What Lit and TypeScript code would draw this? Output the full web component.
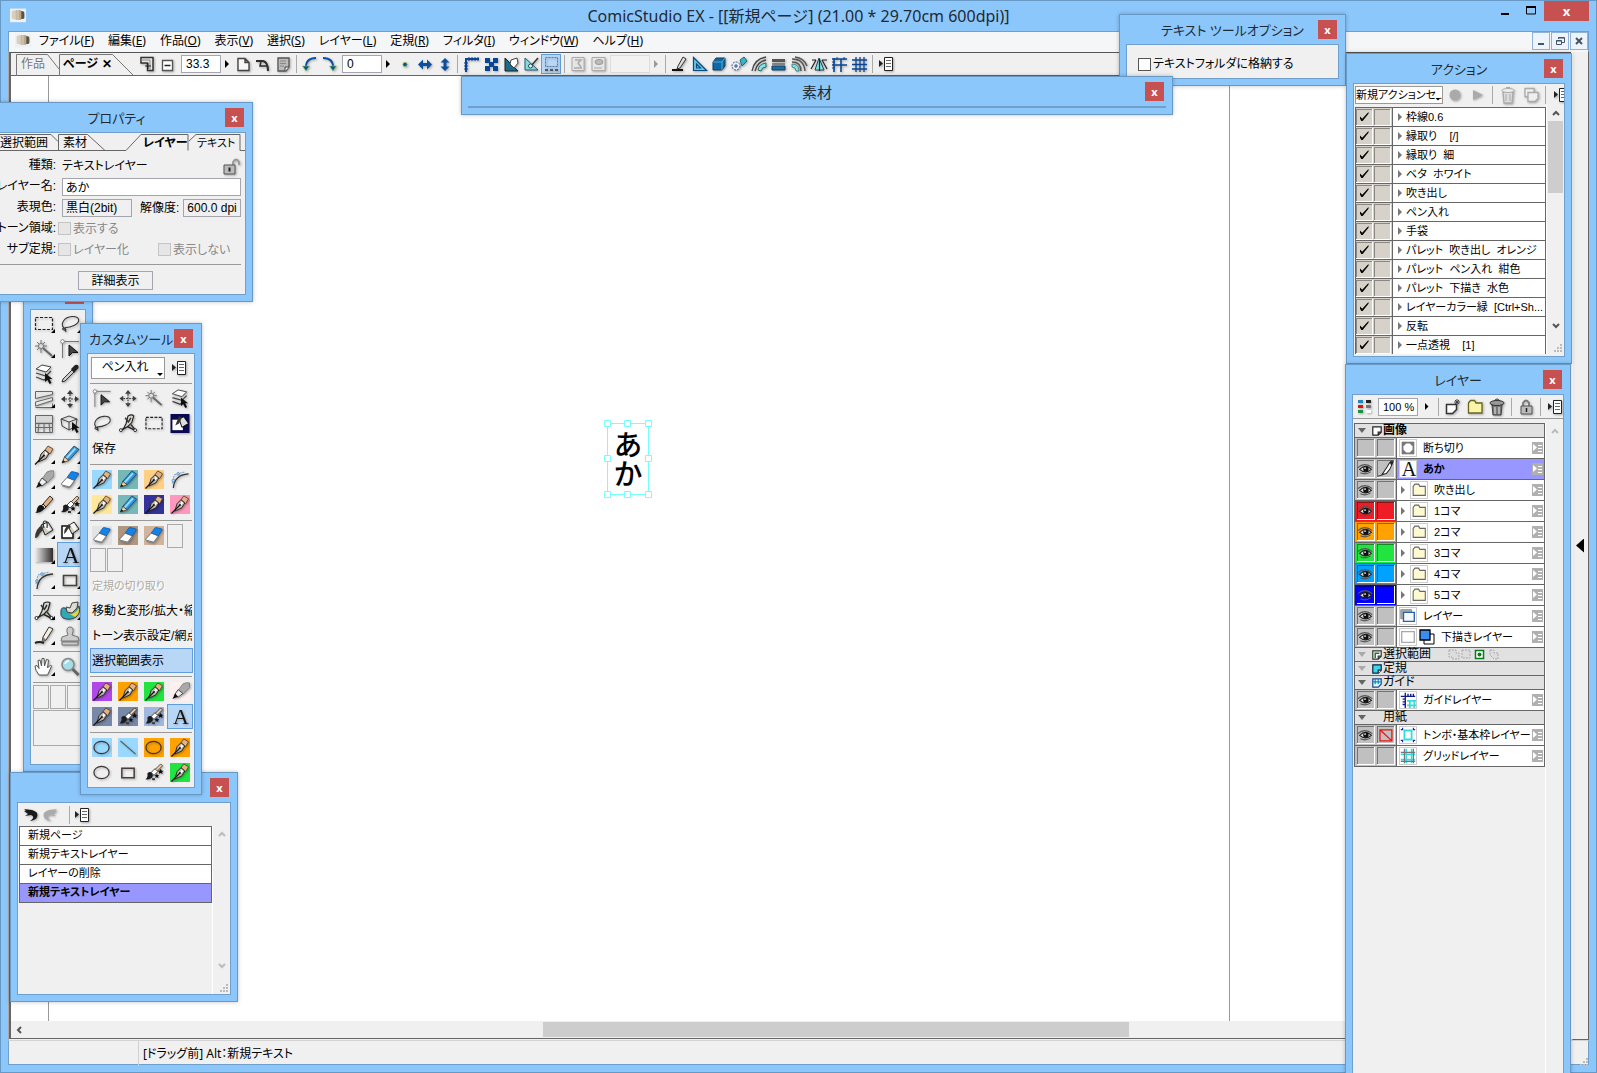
import { LitElement, html, css, svg, nothing, TemplateResult, SVGTemplateResult } from "lit";
import { customElement, property } from "lit/decorators.js";
import { classMap } from "lit/directives/class-map.js";

const nib = svg`
  <path d="M14 1l5 3-3 5-5-4z" fill="#e2b184" stroke="#4a3320" stroke-width=".8"/>
  <path d="M11 5l4 3.500-3 5L4.500 17l2.500-8z" fill="#b9b3a8" stroke="#1d1a16" stroke-width=".9"/>
  <path d="M11.500 6.500l2 2-4 4z" fill="#fff"/>
  <path d="M1 19.500L10 10.500" stroke="#111" stroke-width="1.200"/>
  <circle cx="10" cy="10.500" r="1" fill="#111"/>`;

const patternBrush = svg`
  <path d="M17 1l2 2-6 6-2-2z" fill="#e8c9a0" stroke="#3a2c20" stroke-width=".8"/>
  <path d="M11 6l3 3-4 4-3-3z" fill="#fff" stroke="#222" stroke-width=".8"/>
  <path d="M3 11q3-3 5 0t-1 5q-3 2-6 1 3-2 2-6z" fill="#1c1c1c"/>
  <path d="M17 6l1 2 2 .300-1.500 1.300.500 2-2-1-2 1 .500-2L14 8.300l2-.300zM13 11l.8 1.600 1.800.200-1.300 1.200.400 1.800-1.700-.9-1.600.9.300-1.800-1.300-1.200 1.900-.200z" fill="#111"/>
  <path d="M8 16h3v2H8z" fill="#333"/>`;

const bucket = svg`
  <path d="M7 5l7-3 5 8-8 5z" fill="#cfcac2" stroke="#222"/>
  <path d="M9 5l4-2 4 7-3 1z" fill="#f6f4f0"/>
  <path d="M10 8q-2-7 1-7t2 7" fill="none" stroke="#333" stroke-width="1.200"/>
  <path d="M8 5q-7 4-7 13 3 0 5-5l3-3z" fill="#3b3733"/>`;

const nodes: SVGTemplateResult = svg`
  <path d="M3 17l6-4 8 4" fill="none" stroke="#222" stroke-width="1.500"/>
  <path d="M10 2q4-2 6 0l-2 7-4 4-5 3 3-6z" fill="#d8d4cc" stroke="#222" stroke-width="1.200"/>
  <path d="M10 9l3-5M7 4l3 4M13 11l4 5" stroke="#333" stroke-width="1.500"/>
  <circle cx="2.500" cy="17" r="1.500" fill="#fff" stroke="#222"/>
  <circle cx="17.500" cy="17" r="1.500" fill="#fff" stroke="#222"/>`;

const ICONS: Record<string, SVGTemplateResult> = {
  marquee: svg`<path d="M1.500 3.500h17v12h-17z" fill="none" stroke="#222" stroke-width="1.200" stroke-dasharray="3 1.500"/>`,
  lasso: svg`<path d="M4 14C0 10 4 3 12 2.500s9 6 2 9-9 1.500-9 2.500q2 3-1 2t0-2q1 0 2 4" fill="none" stroke="#333" stroke-width="1.100"/>`,
  wand: svg`<path d="M9 9l9 8" stroke="#666" stroke-width="2"/><path d="M7 1v4M7 10v4M1 7h4M9 7h4M3 3l3 3M11 3L8 6M3 11l2.500-2.500" stroke="#777"/><circle cx="7" cy="7" r="2.500" fill="#ddd" stroke="#777"/>`,
  object: svg`<path d="M2.500 2v17M2 2.500h17" stroke="#777"/><circle cx="2.500" cy="2.500" r="1.800" fill="#fff" stroke="#888"/><path d="M9 6v11l3.500-3.500H18z" fill="#444" stroke="#111"/>`,
  layers: svg`<path d="M2 5l6-4 9 2-5 5z" fill="#fff" stroke="#444"/><path d="M2 9l10 3 5-5M2 13l8 3 4-3" fill="none" stroke="#444" stroke-width="1.300"/><path d="M11 9v9l2.500-2 2 4 2-1-2-4h3z" fill="#111"/>`,
  dropper: svg`<path d="M2 18l1-3 9-9 2 2-9 9z" fill="#ccc" stroke="#333"/><path d="M11 5l4-4q4-1 3.500 3l-4.500 5z" fill="#222"/>`,
  frames: svg`<path d="M1.500 2.500h17v3l-17 4zM1.500 13l17-4.500v3l-17 5.500zM1.500 18.500h17v-4" fill="#e6e6e6" stroke="#666"/>`,
  move: svg`<path d="M10 1L13 5H7zM10 19L13 15H7zM1 10L5 7v6zM19 10L15 7v6z" fill="#3a3a3a"/><path d="M10 5v10M5 10h10" stroke="#444" stroke-width="1.200" stroke-dasharray="2 1"/>`,
  panel: svg`<path d="M2 2h16v6H2z" fill="#d8d8d8"/><path d="M1.500 1.500h17v17h-17zM1.500 9.500h17M1.500 13.500h17M5 9.500l-1 9M10 9.500v9M15 9.500l1 9" fill="none" stroke="#666"/>`,
  cube: svg`<path d="M1 5l8-3 8 3-1 7-7 4-7-4zM1 5l8 3 8-3M9 8v8" fill="none" stroke="#444"/><path d="M12 8v9l2.500-2 2 4 2-1-2-4h3z" fill="#111"/>`,
  pen: nib,
  pencil: svg`<path d="M14 1l5 3.500L9 15.500 4.500 12z" fill="#2b9be2" stroke="#1c3c5c" stroke-width=".8"/><path d="M14.500 3l1.500 1-9 10-1.500-1z" fill="#a6dcff"/><path d="M4.500 12L9 15.500 2 18z" fill="#f0d5a8" stroke="#433" stroke-width=".8"/><path d="M2 18l1.200-3 2 1.800z" fill="#111"/>`,
  marker: svg`<path d="M13 2q4-2 7-1v5l-7 7-5-4z" fill="#a9a9a9" stroke="#777" stroke-width=".8"/><path d="M8 8l5 4-5 4-4-2z" fill="#eee" stroke="#444"/><path d="M5 12l3 3.500-6 2.500z" fill="#111"/>`,
  eraser: svg`<path d="M11 2q.5-.5 1-.4l6 1.400q1 .3.500 1.500l-4 6-7.500-3z" fill="#1483e8" stroke="#135ba2" stroke-width=".8"/><path d="M7 7.500l7.500 3-4 5.500q-.8 1-2 .7L2 15q-1-.5-.4-1.500z" fill="#fff" stroke="#555" stroke-width=".8"/><path d="M10.500 16l4-5.500v2l-4 5q-.8 1-2 .7L2.500 16.500l-.5-1.500 6.500 1.700q1.200.3 2-.7z" fill="#888"/>`,
  brush: svg`<path d="M16 1l3 3-7 8-3-3z" fill="#e0b184" stroke="#3a2c20"/><path d="M9 9l3 3-2 2-3-3z" fill="#ddd" stroke="#222"/><path d="M7 10q4 1 3 4-3 4-9 4 2-1 2-4 1-4 4-4z" fill="#171513"/>`,
  pattern: patternBrush,
  bucket,
  bucketBox: svg`<path d="M2 6h11v12H2z" fill="#fff" stroke="#111" stroke-width="1.500"/><path d="M8 6l6-4 5 7-7 5z" fill="#cfcac2" stroke="#222"/><path d="M10 5l4-2 3 6-3 2z" fill="#f6f4f0"/><path d="M9 4q-5 4-5 10 2-1 4-5l3-2z" fill="#3b3733"/>`,
  closedFill: svg`<path d="M0 0h20v20H0z" fill="#0a0a52"/><path d="M2 6h11v11H2z" fill="#fff"/><path d="M9 5l5-2 5 7-7 4z" fill="#ddd" stroke="#000"/><path d="M9 2l-4 10 4-2 3-6z" fill="#333"/>`,
  gradient: svg`<defs><linearGradient id="fade"><stop offset="0" stop-color="#eee"/><stop offset="1" stop-color="#322b2b"/></linearGradient></defs><path d="M1 3h18v14H1z" fill="url(#fade)"/>`,
  text: svg`<text x="11" y="18" text-anchor="middle" font-family="Liberation Serif, serif" font-size="23" font-weight="400" fill="#111">A</text>`,
  curve: svg`<path d="M3 19Q4 5 19 4" fill="none" stroke="#333" stroke-width="1.300"/><path d="M2 14L4 5l11-3" fill="none" stroke="#6b9dd8" stroke-dasharray="2 1"/><circle cx="8" cy="4" r="1.300" fill="#cde" stroke="#48c" stroke-width=".8"/><circle cx="3" cy="11" r="1.300" fill="#cde" stroke="#48c" stroke-width=".8"/>`,
  rect: svg`<path d="M3.500 5.500h13v10h-13z" fill="none" stroke="#4a3f3f" stroke-width="1.600"/>`,
  joint: nodes,
  smudge: svg`<path d="M1 10q0-4 4-3 4 8 14-2 2 7-3 11-6 4-13 1-3-2-2-7z" fill="#2fa8b8" stroke="#345"/><path d="M10 13q5 0 9-6 1 6-4 9z" fill="#f3d338"/><path d="M12 2l6-1-1 6-5 5-5-1-1-5 4 1z" fill="#e0dcd4" stroke="#444"/>`,
  linePen: svg`<path d="M1 17q4-2 9 0" stroke="#222" stroke-width="2" fill="none"/><path d="M15 1l4 2-7 11-4 2 1-5z" fill="#f4efe6" stroke="#333"/><path d="M9 11l3 2.500-4 2.500z" fill="#876"/>`,
  stamp: svg`<path d="M8 9q-3-8 2-8t2 8l6 2 1 4H1l1-4zM2 16h16v3H2z" fill="#ccc" stroke="#777"/>`,
  hand: svg`<path d="M5 18q-4-5-4-9l2-.500 2 3-1-8 2-.500 1.500 6 .5-7.500h2l.5 7.500 2-6.500 2 .500-1 8 3-3 1 1q-2 5-4 9z" fill="#fff" stroke="#555"/>`,
  zoom: svg`<circle cx="8" cy="7.500" r="6" fill="#a4dde6" stroke="#888" stroke-width="1.600"/><path d="M5 7q1-3 4-3" stroke="#fff" stroke-width="1.500" fill="none"/><path d="M12.500 12l6 6" stroke="#666" stroke-width="3"/>`,
  ellipse: svg`<ellipse cx="9.500" cy="10" rx="8" ry="6.500" fill="none" stroke="#3b3434" stroke-width="1.300"/>`,
  line: svg`<path d="M2 3l16 14" stroke="#555" stroke-width="1.200"/>`,
  flyout: svg`<path d="M3 6v7l4-3.500z" fill="#222"/><path d="M8.500 3.500h8v13h-8z" fill="#fff" stroke="#222"/><path d="M10 6.500h5M10 9.500h5M10 12.500h5" stroke="#666"/>`,
  undoBack: svg`<path d="M4 4l8 1q7 2 5 7-1 3-7 4 6-4 1-6l-6 1 3-2-4-3 2-.5z" fill="#1a1a1a"/>`,
  redoBack: svg`<path d="M16 4L8 5Q1 7 3 12q1 3 7 4-6-4-1-6l6 1-3-2 4-3-2-.5z" fill="#aaa"/>`,
  addPanel: svg`<path d="M2 3.500h12v13H8.500V9H2z" fill="#e8e8e8" stroke="#333" stroke-width="1.500"/><path d="M2 6h9v10" fill="none" stroke="#888"/><path d="M6 12h6M9 9v6" stroke="#222"/>`,
  minusPanel: svg`<path d="M3.500 6.500h10v10h-10z" fill="#fff" stroke="#555" stroke-width="1.300"/><path d="M5.500 11.500h6" stroke="#222" stroke-width="1.500"/>`,
  page: svg`<path d="M5 4.500h7l4 4v8H5zM12 4.500v4h4" fill="#f7f7f7" stroke="#444" stroke-width="1.400"/>`,
  turn: svg`<path d="M3 7h7q5 1 5 10" fill="none" stroke="#2d2d2d" stroke-width="2"/><path d="M8 7l-1 5h8" fill="none" stroke="#2d2d2d" stroke-width="1.500"/>`,
  pageGrey: svg`<path d="M5 4h11v9l-3 4H5z" fill="#bbb" stroke="#555" stroke-width="1.300"/><path d="M7 7h6M7 9.500h6M7 12h4" stroke="#888"/><path d="M12 17v-4h4" fill="#eee" stroke="#444"/>`,
  rotateLeft: svg`<path d="M16 4Q6 4 6 13" fill="none" stroke="#0a50a0" stroke-width="2"/><path d="M2.500 12h7L6 17z" fill="#0a50a0" stroke="#9d3" stroke-width=".6"/>`,
  rotateRight: svg`<path d="M3 4Q13 4 13 13" fill="none" stroke="#0a50a0" stroke-width="2"/><path d="M9.500 12h7L13 17z" fill="#0a50a0" stroke="#9d3" stroke-width=".6"/>`,
  dot: svg`<circle cx="11" cy="10.500" r="2.200" fill="#0a50a0" stroke="#bd4" stroke-width=".6"/>`,
  horizontal: svg`<path d="M4 10.500L9 5.500v3.500h4V5.500l5 5-5 5V12H9v3.500z" fill="#0a50a0"/>`,
  vertical: svg`<path d="M11 4L15.500 8.500h-3v4h3L11 17l-4.500-4.500h3v-4h-3z" fill="#0a50a0"/>`,
  corner: svg`<path d="M5 18V5h13" fill="none" stroke="#0a4594" stroke-width="2"/><path d="M8 3v4M11 3v4M14 3v4M17 3v4M3 9h4M3 12h4M3 15h4" stroke="#0a4594"/>`,
  checker: svg`<path d="M4 4h5v4h3V4h5v5h-4v3h4v5h-5v-4H9v4H4v-5h4V9H4z" fill="#0a4594"/>`,
  rulerHand: svg`<path d="M4 4v13h13L12 12z" fill="#1a6a8a" stroke="#222"/><path d="M10 6l6-2 1 5-4 5-4-4z" fill="#fff" stroke="#444"/>`,
  rulerPen: svg`<path d="M4 4v12h13z" fill="#7fdcdc" stroke="#357"/><path d="M17 4l-7 8" stroke="#333" stroke-width="1.500"/><circle cx="9.500" cy="12" r="2" fill="#dff" stroke="#345"/>`,
  selectionShow: svg`<path d="M4.500 3.500h12v9h-12z" fill="none" stroke="#5b7ba3" stroke-dasharray="2 1"/><path d="M4 15h3v2H4zM9 15h3v2H9zM14 15h3v2h-3z" fill="#555"/>`,
  docOff: svg`<path d="M4 3.500h12v13H4z" fill="#e5e5e5" stroke="#aaa"/><path d="M7 6h6l-3 3 3 4M6 14h8" fill="none" stroke="#aaa" stroke-width="1.500"/>`,
  eyeOff: svg`<path d="M4 3.500h13v13H4z" fill="#e5e5e5" stroke="#aaa"/><ellipse cx="11" cy="8" rx="4" ry="2.500" fill="#bbb" stroke="#999"/><path d="M6 14h8" stroke="#aaa"/>`,
  rulerLine: svg`<path d="M3 16h11" stroke="#111" stroke-width="2"/><path d="M14 3l3 2-6 9-3 1 1-3z" fill="#ddd" stroke="#333"/>`,
  triangle: svg`<path d="M4.500 3.500v13h13zM7.500 10v4h4z" fill="#6cc8e8" fill-rule="evenodd" stroke="#0b4a80" stroke-width="1.200"/>`,
  box: svg`<path d="M4 8l3-4h9v8l-3 4H4z" fill="#0e68a8" stroke="#123c5c"/><path d="M4 8h9v8M13 8l3-4" stroke="#5ac" fill="none"/>`,
  spray: svg`<path d="M11 6l4-3 3 4-5 5z" fill="#35b8c6" stroke="#267"/><circle cx="7" cy="12" r="4" fill="#eef" stroke="#458" stroke-dasharray="2 1"/><path d="M7 10v4M5 12h4" stroke="#258"/>`,
  arcs: svg`<path d="M3 17Q5 5 17 3M6 17Q8 8 17 6" fill="none" stroke="#444" stroke-width="1.300"/><path d="M9 16q1-6 8-7v4q-4 0-5 4z" fill="#7fe3e3" stroke="#366"/>`,
  parallel: svg`<path d="M3 5h13v3H3z" fill="#555"/><path d="M3 12h13v4H3z" fill="#1c6ea8" stroke="#123c5c"/><path d="M3 10h13" stroke="#333"/>`,
  concentric: svg`<path d="M3 8q9 0 9 9M3 5q12 0 13 12M6 3q9 1 12 9" fill="none" stroke="#555" stroke-width="1.500"/><path d="M3 10q7 0 7 7H7q0-4-4-4z" fill="#7fe3e3" stroke="#366" stroke-width=".7"/>`,
  perspective: svg`<path d="M10 4L6 16h9z" fill="#7fe3e3" stroke="#245"/><path d="M2 15l5-9M18 15l-5-9M3 6h4M13 6h5M10.500 5v12" stroke="#222" stroke-width="1.200"/>`,
  rulerGrid: svg`<path d="M5 18V4M3 5h15M3 11h15M12 5v13" stroke="#0a4594" stroke-width="1.600" fill="none"/><path d="M8 3v3M15 3v3M3 8h3M3 14h3" stroke="#0a4594"/>`,
  grid: svg`<path d="M7 3v15M11 3v15M15 3v15M3 6h15M3 10.500h15M3 15h15" stroke="#0a4594" stroke-width="1.300"/>`,
  record: svg`<circle cx="10" cy="10" r="5.500" fill="#aaa"/>`,
  play: svg`<path d="M5 5v10l10-5z" fill="#aaa"/>`,
  trashOff: svg`<path d="M5 7h10l-1 11H6z" fill="#ddd" stroke="#aaa" stroke-width="1.300"/><ellipse cx="10" cy="5.500" rx="6" ry="2" fill="#eee" stroke="#aaa"/><path d="M8 2.500h4M8 9v7M12 9v7" stroke="#aaa"/>`,
  copyOff: svg`<path d="M4 3.500h9v8H4z" fill="#eee" stroke="#aaa" stroke-width="1.300"/><path d="M7 7.500h10v6l-3 3H7z" fill="#eee" stroke="#aaa" stroke-width="1.300"/>`,
  palette: svg`<path d="M3 3h5v3H3z" fill="#28b"/><path d="M3 8h5v3H3z" fill="#d11"/><path d="M3 13h5v3H3z" fill="#1a9040"/><path d="M11 3h5v3h-5z" fill="#222"/><path d="M11 8h5v3h-5z" fill="#777"/><path d="M11 13h5v3h-5z" fill="#fff"/>`,
  newLayer: svg`<path d="M3.500 7.500h10v5l-4 4h-6z" fill="#fff" stroke="#333" stroke-width="1.500"/><path d="M14 2v6M11 5h6M12 3l4 4M16 3l-4 4" stroke="#444"/>`,
  folder: svg`<path d="M3.500 6l2-2.500h4l1.500 2.500h6v10h-13.500z" fill="#fbf5a8" stroke="#6b6320" stroke-width="1.300"/>`,
  folderPale: svg`<path d="M3.500 6l2-2.500h4l1.500 2.500h6v10h-13.500z" fill="#fdfad2" stroke="#666" stroke-width="1.200"/>`,
  trash: svg`<path d="M5 8h10l-1 10H6z" fill="#777" stroke="#444"/><ellipse cx="10" cy="6" rx="7" ry="2.500" fill="#999" stroke="#333"/><path d="M7 4q3-4 6 0" fill="none" stroke="#333"/><path d="M8 10v7M12 10v7" stroke="#eee"/>`,
  lock: svg`<path d="M7 9V6q3-5 6 0v3" fill="none" stroke="#777" stroke-width="1.800"/><path d="M5 9h11v8H5z" fill="#bbb" stroke="#555"/><path d="M10.500 11v4" stroke="#222" stroke-width="1.500"/>`,
  unlock: svg`<path d="M12 10V6q3-5 6 0v3" fill="none" stroke="#999" stroke-width="1.800"/><path d="M3 9h11v9H3z" fill="#bbb" stroke="#555"/><path d="M8.500 11.500v4" stroke="#222" stroke-width="2"/>`,
  eye: svg`<path d="M3 11q7-7 14 0-7 6-14 0z" fill="#ddd" stroke="#222" stroke-width="1.200"/><circle cx="10.500" cy="10.500" r="3.200" fill="#111"/><circle cx="9.500" cy="9.500" r="1" fill="#fff"/><path d="M1 9q8-7 17 0M4 15q6 3 12-1" fill="none" stroke="#555" stroke-width="1.300"/>`,
  editing: svg`<path d="M1 19q8-1 10-6" fill="none" stroke="#222"/><path d="M6 17l6-9 3-5q3-3 4-1l-4 9-4 5z" fill="#fff" stroke="#222" stroke-width="1.200"/><path d="M15 3q2-2 4-1l-2 5z" fill="#222"/>`,
  forbid: svg`<path d="M3.500 4.500h14v13h-14zM3.500 4.500l14 13" fill="none" stroke="#e11" stroke-width="1.500"/>`,
  app: svg`<path d="M0 2h20v17H0z" fill="#eef1f4"/><path d="M2 6q3-3 5-1v10q-3 1-5-1z" fill="#d9cfc0"/><path d="M7 4h7v12H7z" fill="#b7a88d"/><path d="M8 4h3v12H8z" fill="#cfc3ad"/><path d="M14 5q4 0 4 3v5q0 2-4 2z" fill="#5c5143"/>`,
  tMask: svg`<path d="M3 3h14v14H3z" fill="#777"/><path d="M8 5h4l3 3v4l-3 3H8l-3-3V8z" fill="#fff"/>`,
  tLayer: svg`<path d="M2 3h12v10H2z" fill="#aaa" stroke="#888"/><path d="M5 6h12v10H5z" fill="#f4f8ff" stroke="#2a62a8" stroke-width="1.500"/>`,
  tBlank: svg`<path d="M3 4h14v12H3z" fill="#fff" stroke="#aaa" stroke-width="1.500"/>`,
  tGuide: svg`<path d="M12 10v9M17 10v9M9 11h10M9 16h10" stroke="#3dd" stroke-width="2"/><path d="M7 19V2M2 6h16M4 9h3M4 12h3M4 15h3M10 3v3M13 3v3M16 3v3" stroke="#111a8a" stroke-width="1.500"/>`,
  tFrame: svg`<path d="M6 5h8v10H6z" fill="#fff" stroke="#3dd" stroke-width="2"/><path d="M2 4h2V2M16 2v2h2M2 16h2v2M18 16h-2v2" fill="none" stroke="#22a" stroke-width="1.300"/>`,
  tGrid: svg`<path d="M2 8h16M2 14h16M8 2v16M14 2v16" stroke="#3dd" stroke-width="1.800"/><path d="M2 6h16M2 16h16M6 2v16M16 2v16" stroke="#777" stroke-width="1.300"/>`,
  gPage: svg`<path d="M3 3h14v9l-5 5H3zM12 17v-5h5" fill="#fff" stroke="#222" stroke-width="2"/>`,
  gSelection: svg`<path d="M3 3h14v9l-5 5H3zM12 17v-5h5" fill="#fff" stroke="#333" stroke-width="2"/><path d="M7 15V7h7" fill="none" stroke="#197a2a" stroke-width="2.500"/>`,
  gRuler: svg`<path d="M3 3h14v9l-5 5H3z" fill="#3cd8e8" stroke="#124" stroke-width="2"/><path d="M12 17v-5h5" fill="#fff" stroke="#124" stroke-width="2"/>`,
  gGuide: svg`<path d="M3 3h14v9l-5 5H3z" fill="#dff" stroke="#248" stroke-width="2"/><path d="M7 3v9M12 3v9M3 8h14" stroke="#18c" stroke-width="2"/>`,
};

const icon = (name: string, size = "") =>
  html`<svg class="icon ${size}" viewBox="0 0 20 20" aria-hidden="true">${ICONS[name]}</svg>`;

/** Floating palette: blue frame, centred caption, red close box. */
@customElement("palette-window")
export class PaletteWindow extends LitElement {
  @property() caption = "";

  static styles = css`
    :host {
      display: flex;
      flex-direction: column;
      box-sizing: border-box;
      background: #8cc7fb;
      border: 1px solid #6899c4;
      box-shadow: 0 0 4px rgba(0, 0, 0, 0.25);
    }
    .bar {
      display: grid;
      grid-template-columns: var(--caption-indent, 28px) minmax(0, 1fr) 28px;
      flex: none;
      height: 29px;
    }
    .caption {
      grid-column: 2;
      margin: 0;
      text-align: center;
      font: 400 var(--caption-size, 14px)/30px "Noto Sans", "Noto Sans CJK JP", sans-serif;
      font-feature-settings: "palt";
      color: #1e2a35;
      white-space: nowrap;
    }
    .close {
      width: 19px;
      height: 19px;
      margin: 5px 0 0 1px;
      padding: 0;
      border: 0;
      background: #c75050;
      color: #fff;
      font: bold 11px/17px "Noto Sans", sans-serif;
    }
    .body {
      flex: 1;
      min-height: 0;
      margin: 0 6px 6px;
      border: 1px solid #6f9fca;
      background: #f0f0f0;
      overflow: hidden;
    }
  `;

  render() {
    return html`
      <div class="bar">
        <h2 class="caption">${this.caption}</h2>
        <button class="close" aria-label="閉じる">x</button>
      </div>
      <div class="body"><slot></slot></div>
    `;
  }
}

const MENUS: [string, string][] = [
  ["ファイル", "F"], ["編集", "E"], ["作品", "O"], ["表示", "V"], ["選択", "S"],
  ["レイヤー", "L"], ["定規", "R"], ["フィルタ", "I"], ["ウィンドウ", "W"], ["ヘルプ", "H"],
];

const ACTIONS = [
  "枠線0.6", "縁取り\u00a0\u00a0\u00a0\u00a0[/]", "縁取り\u00a0\u00a0細", "ベタ\u00a0\u00a0ホワイト", "吹き出し", "ペン入れ", "手袋",
  "パレット\u00a0\u00a0吹き出し\u00a0\u00a0オレンジ", "パレット\u00a0\u00a0ペン入れ\u00a0\u00a0紺色", "パレット\u00a0\u00a0下描き\u00a0\u00a0水色",
  "レイヤーカラー緑\u00a0\u00a0[Ctrl+Sh...", "反転", "一点透視\u00a0\u00a0\u00a0\u00a0[1]",
];

interface Row {
  name: string;
  group?: boolean;
  icon?: string;
  eye?: boolean;
  second?: string;
  color?: string;
  folder?: boolean;
  active?: boolean;
  bold?: boolean;
  badge?: boolean;
  dim?: boolean;
  modes?: boolean;
}

const LAYERS: Row[] = [
  { name: "画像", group: true, icon: "gPage", bold: true },
  { name: "断ち切り", icon: "tMask" },
  { name: "あか", icon: "text", eye: true, second: "editing", active: true, bold: true },
  { name: "吹き出し", folder: true, eye: true },
  { name: "1コマ", folder: true, eye: true, color: "red" },
  { name: "2コマ", folder: true, eye: true, color: "orange" },
  { name: "3コマ", folder: true, eye: true, color: "green" },
  { name: "4コマ", folder: true, eye: true, color: "sky" },
  { name: "5コマ", folder: true, eye: true, color: "blue" },
  { name: "レイヤー", icon: "tLayer", eye: true },
  { name: "下描きレイヤー", icon: "tBlank", eye: true, badge: true },
  { name: "選択範囲", group: true, icon: "gSelection", dim: true, modes: true },
  { name: "定規", group: true, icon: "gRuler", dim: true },
  { name: "ガイド", group: true, icon: "gGuide" },
  { name: "ガイドレイヤー", icon: "tGuide", eye: true },
  { name: "用紙", group: true },
  { name: "トンボ・基本枠レイヤー", icon: "tFrame", eye: true, second: "forbid" },
  { name: "グリッドレイヤー", icon: "tGrid" },
];

// A trailing "+" marks a tool that opens a sub-tool menu; "*" marks the current tool.
const TOOLS: string[][] = [
  ["marquee+", "lasso+", "wand+", "object", "layers", "dropper", "frames+", "move", "panel", "cube"],
  ["pen+", "pencil+", "marker+", "eraser+", "brush+", "pattern+", "bucket+", "bucketBox+", "gradient+", "text*", "curve+", "rect+"],
  ["joint+", "smudge+", "linePen+", "stamp"],
  ["hand+", "zoom"],
];

@customElement("app-root")
export class AppRoot extends LitElement {
  static styles = css`
    :host {
      display: block;
      position: relative;
      height: 100vh;
      overflow: hidden;
      box-sizing: border-box;
      background: #8cc7fb;
      color: #000;
      font: 12px/16px "Liberation Sans", "Noto Sans CJK JP", sans-serif;
      font-feature-settings: "palt";
      white-space: nowrap;
    }
    * { box-sizing: border-box; }
    button, input, select {
      font: inherit;
      font-feature-settings: inherit;
      color: inherit;
      margin: 0;
      padding: 0;
      border: 0;
      border-radius: 0;
      background: none;
      appearance: none;
    }
    ul { list-style: none; margin: 0; padding: 0; }
    .icon {
      display: block;
      flex: none;
      width: 20px;
      height: 20px;
      filter: drop-shadow(1px 1px 1px rgba(0, 0, 0, 0.3));
    }
    .icon.small { width: 12px; height: 12px; filter: none; }
    .icon.thumb { width: 18px; height: 18px; }
    .icon.app { width: 16px; height: 16px; filter: none; }

    /* frame */
    .frame {
      display: flex;
      flex-direction: column;
      height: 100%;
      padding: 0 7px 7px;
      border: 1px solid #6899c4;
    }
    .titlebar {
      display: grid;
      grid-template-columns: 1fr auto 1fr;
      flex: none;
      height: 30px;
    }
    .titlebar .icon { margin: 6px 0 0 2px; }
    .titlebar h1 {
      margin: 0;
      font: 16px/30px "Noto Sans", "Noto Sans CJK JP", sans-serif;
      color: #1e2a35;
    }
    .winbuttons { display: flex; justify-content: flex-end; height: 20px; }
    .winbuttons button { width: 26px; display: grid; place-items: center; }
    .winbuttons svg { width: 12px; height: 12px; display: block; }
    .winbuttons .quit {
      width: 45px;
      background: #c75050;
      color: #fff;
      font: bold 13px/16px "Noto Sans", sans-serif;
    }
    .menubar {
      display: flex;
      flex: none;
      height: 21px;
      padding-left: 6px;
      border: 1px solid #6f9fca;
      border-bottom: 0;
      background: #f5f6f8;
      font: 12px/18px "Noto Sans", "Noto Sans CJK JP", sans-serif;
      font-feature-settings: "palt";
    }
    .menus { display: flex; gap: 14px; padding-left: 8px; flex: 1; height: 18px; }
    .mdi { display: flex; gap: 1px; }
    .mdi button {
      display: grid;
      place-items: center;
      width: 18px;
      height: 18px;
      border: 1px solid #8fb2d6;
      background: #eef4fb;
    }
    .mdi svg { width: 12px; height: 12px; display: block; }
    .client {
      flex: 1;
      min-height: 0;
      display: grid;
      grid-template-columns: 1fr 18px;
      background: #f0f0f0;
      border-left: 1px solid #a9a9a9;
    }
    .document {
      display: flex;
      flex-direction: column;
      min-width: 0;
      border: 2px solid #666;
      border-width: 1px 0 1px 2px;
      border-top-color: #555;
      margin-bottom: 1px;
    }
    .dock {
      display: flex;
      align-items: center;
      padding-left: 3px;
      border-left: 2px solid #fff;
      border-right: 1px solid #666;
      border-bottom: 1px solid #666;
    }
    .dock i {
      width: 8px;
      height: 14px;
      background: #000;
      clip-path: polygon(100% 0, 100% 100%, 0 50%);
    }

    /* toolbar */
    .toolbar {
      display: flex;
      align-items: center;
      flex: none;
      height: 23px;
      border-bottom: 1px solid #666;
    }
    .tabs { flex: none; display: block; width: 128px; height: 22px; position: relative; }
    .tabs svg { position: absolute; inset: 0; width: 128px; height: 23px; }
    .tabs div { position: relative; display: flex; padding: 1px 0 0 10px; line-height: 20px; }
    .tabs button { width: 42px; text-align: left; color: #777; }
    .tabs .on { color: #000; font-weight: 700; width: 39px; }
    .tabs .x { width: 12px; font-weight: 700; color: #000; }
    .tool { width: 20px; height: 20px; flex: none; }
    .tool.on { background: #b8d6f5; outline: 1px solid #5f9ede; outline-offset: -1px; }
    .field { background: #fff; border: 1px solid #a5a5b0; }
    .toolbar .field { width: 40px; height: 18px; margin: 0 0 1px 2px; padding-left: 4px; }
    .toolbar .field:disabled { background: #f2f2f2; border-color: #ddd; }
    .arrow { flex: none; width: 12px; height: 18px; display: grid; place-items: center; }
    .arrow::before {
      content: "";
      width: 4px;
      height: 8px;
      background: #000;
      clip-path: polygon(0 0, 100% 50%, 0 100%);
    }
    .arrow:disabled::before { background: #999; }
    .sep { flex: none; width: 1px; height: 18px; margin: 0 3px; background: #aaa; }

    /* canvas */
    .canvas { flex: 1; min-height: 0; background: #fff; padding: 0 341px 0 37px; }
    .sheet { position: relative; height: 100%; border: 1px solid #999; border-width: 0 1px; }
    .selection {
      position: absolute;
      left: 558px;
      top: 347px;
      width: 42px;
      height: 72px;
      border: 1px solid #7ff;
      display: grid;
      place-items: center;
      writing-mode: vertical-rl;
      font: 500 29px/30px "Noto Sans CJK JP", serif;
      font-feature-settings: normal;
    }
    .handles { position: absolute; inset: -4px; width: 48px; height: 78px; fill: #fff; stroke: #7ff; }
    .hscroll {
      flex: none;
      display: grid;
      grid-template-columns: 16px 516fr 586fr 426fr 16px;
      height: 17px;
      align-items: center;
      background: #f0f0f0;
    }
    .hscroll .thumb { grid-column: 3; height: 15px; background: #cdcdcd; }
    .chev { width: 8px; height: 8px; fill: none; stroke: #555; stroke-width: 2; display: block; justify-self: center; }
    .chev.faint { stroke: #bbb; }
    .status {
      flex: none;
      display: grid;
      grid-template-columns: 129px 1fr auto;
      height: 25px;
      border: 1px solid #6f9fca;
      border-top: 1px solid #d4d4d4;
      background: #f0f0f0;
      font: 12px/25px "Noto Sans", "Noto Sans CJK JP", sans-serif;
      font-feature-settings: "palt";
    }
    .status span { border-left: 1px solid #d0d0d0; padding-left: 4px; }
    .grip { width: 8px; height: 8px; fill: #bbb; display: block; align-self: end; }

    /* palette placement on the desktop */
    palette-window { position: absolute; }
    .pText { right: 251px; top: 14px; width: 227px; height: 72px; --caption-size: 13px; }
    .pMaterial { left: 461px; right: 424px; top: 76px; height: 39px; --caption-size: 15px; }
    .pAction { right: 25px; top: 53px; width: 226px; height: 311px; --caption-size: 13px; }
    .pLayer { right: 26px; top: 364px; bottom: -10px; width: 226px; --caption-size: 13px; }
    .pTools { left: 23px; top: 279px; width: 70px; height: 493px; }
    .pProps { left: -20px; top: 102px; width: 273px; height: 200px; --caption-size: 13px; }
    .pHistory { left: 10px; top: 772px; width: 228px; height: 230px; }
    .pCustom { left: 80px; top: 323px; width: 122px; height: 472px; --caption-indent: 8px; --caption-size: 13px; }

    .tick { display: flex; align-items: center; gap: 2px; }
    .tick input { width: 13px; height: 13px; border: 1px solid #555; background: #fff; }
    .tick input:disabled { border-color: #c4c4c4; background: #e6e6e6; }
    .tick.off { color: #888; }
    .folderOption { padding: 11px; }

    /* properties */
    .ptabs { position: relative; height: 18px; }
    .ptabs svg { position: absolute; inset: 0; width: 258px; height: 18px; fill: none; stroke: #666; }
    .ptabs div { position: relative; display: grid; grid-template-columns: 63px 80px 54px 1fr; padding-left: 12px; line-height: 20px; }
    .ptabs button { text-align: left; line-height: 20px; }
    .ptabs .on { font-weight: 700; }
    .ptabs .last { font-size: 11px; }
    .props { display: grid; grid-template-columns: 68px minmax(0, 1fr); column-gap: 6px; padding: 4px 4px 0 0; }
    .props > .key { text-align: right; line-height: 21px; }
    .props > .val { display: flex; align-items: center; height: 21px; gap: 8px; }
    .val .field { height: 18px; padding: 0 3px; flex: 1; min-width: 0; }
    .val output.field { flex: none; background: #f0f0f0; line-height: 16px; }
    .val .mode { width: 70px; }
    .val .dpi { width: 58px; }
    .val .label { flex: 1; text-align: right; margin-right: -4px; }
    .val .grow { flex: 1; }
    .val .tick { margin-left: -4px; }
    .val .wide { width: 96px; }
    .rule { height: 1px; background: #999; border: 0; margin: 4px 4px 6px 0; }
    .detail { display: flex; justify-content: center; padding-right: 2px; }
    .more { width: 75px; height: 19px; border: 1px solid #a5a5b0; }

    /* tool palettes */
    .grid2 { display: grid; grid-template-columns: 26px 26px; }
    .grid4 { display: grid; grid-template-columns: repeat(4, 26px); padding-left: 1px; }
    .cell { width: 26px; height: 25px; display: grid; place-items: center; position: relative; }
    .cell.left { place-items: center start; }
    .cell.more2::after {
      content: "";
      position: absolute;
      right: 2px;
      bottom: 3px;
      width: 4px;
      height: 4px;
      background: #000;
      clip-path: polygon(100% 0, 100% 100%, 0 100%);
    }
    .cell.on { background: #b8d6f5; box-shadow: inset 0 0 0 1px #5f9ede; }
    .line { height: 1px; margin: 3px 2px 2px; background: #999; border: 0; }
    .tools { padding-top: 1px; }
    .slots { display: flex; gap: 1px; padding-left: 2px; height: 25px; }
    .slot { width: 16px; height: 24px; border: 1px solid #aaa; }
    .bigslot { width: 56px; height: 36px; margin: 0 0 0 2px; border: 1px solid #aaa; }
    .tile { display: block; width: 20px; height: 19px; }
    .tile .icon { height: 19px; }
    .c-sky { background: #99d9ff; }
    .c-teal { background: #76b8b8; }
    .c-peach { background: #ffd084; }
    .c-cream { background: #ffe89a; }
    .c-navy { background: #32329a; }
    .c-pink { background: #ff98bc; }
    .c-grey { background: #e4e4e4; }
    .c-brown { background: #ae9680; }
    .c-tan { background: #d0b49c; }
    .c-purple { background: #b048e8; }
    .c-orange { background: #ffa200; }
    .c-green { background: #22e440; }
    .c-rose { background: #fff0f0; }
    .c-slate { background: #7888a8; }
    .c-mist { background: #a0b8e0; }
    .picker { display: flex; align-items: center; gap: 4px; height: 26px; padding: 2px 0 0 3px; }
    .picker select { width: 74px; height: 22px; border: 1px solid #999; background: #fff; padding: 0 6px 3px 0; text-align: center; text-align-last: center; }
    .combo { position: relative; display: block; }
    .combo::after {
      content: "";
      position: absolute;
      right: 2px;
      bottom: 3px;
      width: 6px;
      height: 3px;
      background: #000;
      clip-path: polygon(0 0, 100% 0, 50% 100%);
    }
    .command {
      display: block;
      width: 103px;
      height: 25px;
      margin-left: 2px;
      padding-left: 1px;
      overflow: hidden;
      text-align: left;
      border: 1px solid transparent;
    }
    .command:disabled { color: #aaa; text-shadow: 1px 1px #fff; font-size: 11px; }
    .command.on { background: #b8d6f5; border-color: #5f9ede; }

    /* lists */
    .htools { display: flex; align-items: center; height: 23px; padding-left: 2px; gap: 1px; }
    .htools .sep { margin: 0 1px 0 7px; }
    .listing { display: grid; grid-template-columns: minmax(0, 1fr) 18px; }
    .side { display: flex; flex-direction: column; align-items: center; border-left: 1px solid #fff; padding-top: 4px; }
    .history { padding: 0 0 0 1px; height: 168px; font-size: 11px; }
    .history li { height: 19px; padding-left: 8px; line-height: 17px; background: #fff; border: 1px solid #666; border-bottom-width: 0; }
    .history li:last-child { background: #9797ff; font-weight: 700; border-bottom-width: 1px; height: 20px; }
    .push { flex: 1; }
    .side .grip { align-self: center; margin: 14px 0 2px 4px; }
    .abar { display: flex; align-items: center; height: 21px; padding-left: 1px; }
    .abar select { width: 88px; height: 18px; border: 1px solid #999; background: #fff; font-size: 11px; }
    .abar .tool { width: 23px; padding-left: 2px; }
    .actions { margin: 2px 0 0 1px; font-size: 11px; }
    .actions li {
      display: grid;
      grid-template-columns: 18px 18px 14px 1fr;
      align-items: center;
      height: 19px;
      border: 1px solid #666;
      border-bottom: 0;
      background: linear-gradient(90deg, #d6d2ca 36px, #666 36px, #666 37px, #fff 37px);
    }
    .actions input, .actions b { width: 17px; height: 17px; border: 1px solid #fff; border-width: 0 1px 1px 0; box-shadow: inset 1px 1px #8c8880; display: grid; place-items: center; }
    .actions input::before {
      content: "";
      width: 9px;
      height: 9px;
      background: #000;
      clip-path: polygon(0 45%, 30% 75%, 100% 0, 100% 20%, 35% 100%, 20% 100%, 0 65%);
    }
    .tri { width: 4px; height: 8px; background: #777; clip-path: polygon(0 0, 100% 50%, 0 100%); justify-self: end; margin-right: 4px; }
    .vthumb { width: 15px; height: 72px; margin-top: 4px; background: #cdcdcd; }
    .lbar { display: flex; align-items: center; height: 24px; padding-left: 1px; border-bottom: 1px solid #999; }
    .lbar .field { width: 40px; height: 18px; padding-left: 4px; margin-left: 2px; font-size: 11px; }
    .lbar .arrow { width: 17px; }
    .lbar .tool { width: 22px; padding-left: 1px; }
    .lists { padding-top: 4px; height: 100%; }
    .layers { font-size: 11px; padding-left: 1px; }
    .layers li { display: flex; align-items: center; height: 21px; border: 1px solid #666; border-width: 1px 1px 0; background: #fff; }
    .layers li.group { height: 14px; background: #e1e1e1; font-size: 12px; line-height: 13px; padding-left: 3px; }
    .layers .open { width: 8px; height: 5px; margin-right: 5px; background: #666; clip-path: polygon(0 0, 100% 0, 50% 100%); }
    .layers .dim .open { background: #aaa; }
    .layers .group .none { width: 12px; }
    .layers li.active { background: #9797ff; }
    .layers li.bold { font-weight: 700; }
    .layers li:last-child { height: 22px; border-bottom-width: 1px; }
    .vis { display: flex; gap: 2px; width: 42px; height: 100%; padding: 1px 0 0 2px; background: #c0c0c0; border-right: 1px solid #666; flex: none; }
    .vis button { width: 18px; height: 18px; border: 1px solid #fff; border-width: 0 1px 1px 0; box-shadow: inset 1px 1px rgba(0, 0, 0, 0.4); }
    .vis .icon { width: 17px; height: 17px; filter: none; }
    .vis.red { background: #ee1c25; }
    .vis.orange { background: #ffa200; }
    .vis.green { background: #22e440; }
    .vis.sky { background: #00a2ff; }
    .vis.blue { background: #0000ff; }
    .layers .thumb { margin: 0 6px 0 2px; background: #fff; outline: 1px solid #ccc; outline-offset: -1px; filter: none; }
    .layers .branch { width: 4px; height: 8px; margin: 0 3px 0 4px; background: #777; clip-path: polygon(0 0, 100% 50%, 0 100%); }
    .layers .name { flex: 1; min-width: 0; }
    .layers .menu { flex: none; width: 11px; height: 12px; margin-right: 1px; background: #b0b0b0; }
    .layers .menu svg { width: 11px; height: 12px; display: block; }
    .badge { width: 16px; height: 16px; margin: 0 6px 0 -4px; flex: none; }
    .modes { width: 52px; height: 11px; margin-left: 17px; }
  `;

  private tool(name: string, label: string, on = false) {
    return html`<button class="tool ${on ? "on" : ""}" aria-label=${label}>${icon(name)}</button>`;
  }

  private chevron(dir: "up" | "down" | "left", faint = false) {
    const d = { up: "M1 6l3-3 3 3", down: "M1 2l3 3 3-3", left: "M6 1L3 4l3 3" }[dir];
    return html`<svg class="chev ${faint ? "faint" : ""}" viewBox="0 0 8 8"><path d=${d} /></svg>`;
  }

  private grip() {
    return html`<svg class="grip" viewBox="0 0 8 8"><path d="M6 0h2v2H6zM3 3h2v2H3zM6 3h2v2H6zM0 6h2v2H0zM3 6h2v2H3zM6 6h2v2H6z" /></svg>`;
  }

  private toolbar() {
    const rulers = ["rulerLine", "triangle", "box", "spray", "arcs", "parallel", "concentric", "perspective", "rulerGrid", "grid"];
    return html`
      <div class="toolbar">
        <div class="tabs">
          <svg viewBox="0 0 128 23" fill="none" stroke="#777"><path d="M5.500 23V1.500h31L48 16M48.500 23V1.500h53L122 22" /></svg>
          <div>
            <button>作品</button><button class="on">ページ</button><button class="x" aria-label="ページを閉じる">✕</button>
          </div>
        </div>
        ${this.tool("addPanel", "拡大")} ${this.tool("minusPanel", "縮小")}
        <input class="field" aria-label="表示倍率" value="33.3" />
        <button class="arrow" aria-label="倍率の一覧"></button>
        ${this.tool("page", "ページ")} ${this.tool("turn", "めくる")} ${this.tool("pageGrey", "全体表示")}
        <i class="sep"></i>
        ${this.tool("rotateLeft", "左回転")} ${this.tool("rotateRight", "右回転")}
        <input class="field" aria-label="回転角度" value="0" />
        <button class="arrow" aria-label="角度の一覧"></button>
        ${this.tool("dot", "中央")} ${this.tool("horizontal", "左右反転")} ${this.tool("vertical", "上下反転")}
        <i class="sep"></i>
        ${this.tool("corner", "ルーラー")} ${this.tool("checker", "透明")} ${this.tool("rulerHand", "定規移動")}
        ${this.tool("rulerPen", "スナップ")} ${this.tool("selectionShow", "選択範囲表示", true)}
        <i class="sep"></i>
        ${this.tool("docOff", "トーン")} ${this.tool("eyeOff", "トーン表示")}
        <input class="field" aria-label="トーン倍率" disabled />
        <button class="arrow" aria-label="トーンの一覧" disabled></button>
        <i class="sep"></i>
        ${rulers.map((r, i) => this.tool(r, `定規 ${i + 1}`))}
        <i class="sep"></i>
        ${this.tool("flyout", "メニュー")}
      </div>
    `;
  }

  private toolCell(spec: string) {
    const name = spec.replace(/[+*]/, "");
    return html`<button class=${classMap({ cell: true, more2: spec.endsWith("+"), on: spec.endsWith("*") })} aria-label=${name}>
      ${icon(name)}
    </button>`;
  }

  private tiles(specs: string[]) {
    return html`<div class="grid4">
      ${specs.map((s) => {
        if (s === "slot") return html`<div class="cell left"><i class="slot"></i></div>`;
        const [name, tint = ""] = s.split(":");
        return html`<button class="cell ${tint === "on" ? "on" : ""}" aria-label=${name}>
          <span class="tile ${tint ? "c-" + tint : ""}">${icon(name)}</span>
        </button>`;
      })}
    </div>`;
  }

  private layerRow(r: Row): TemplateResult {
    if (r.group) {
      return html`<li class=${classMap({ group: true, bold: !!r.bold, dim: !!r.dim })}>
        <i class="open"></i>${r.icon ? icon(r.icon, "small") : html`<i class="none"></i>`}<span>${r.name}</span>
        ${r.modes
          ? html`<svg class="modes" viewBox="0 0 52 11" fill="none">
              <path d="M1 1h7v3h3v6H4V8H1zM14 1h8v8h-8zM42 1h4v3h4v6h-4L42 6z" fill="#ddd" stroke="#aaa" stroke-dasharray="2 1" />
              <path d="M27.500 1.500h8v8h-8z" fill="#fff" stroke="#0a7a1a" stroke-width="1.500" /><circle cx="31.500" cy="5.500" r="2" fill="#0a7a1a" />
            </svg>`
          : nothing}
      </li>`;
    }
    return html`<li class=${classMap({ active: !!r.active, bold: !!r.bold })}>
      <div class="vis ${r.color ?? ""}">
        <button aria-label="表示">${r.eye ? icon("eye") : nothing}</button>
        <button aria-label="状態">${r.second ? icon(r.second) : nothing}</button>
      </div>
      ${r.folder ? html`<i class="branch"></i>` : nothing}
      ${icon(r.folder ? "folderPale" : r.icon!, "thumb")}
      ${r.badge
        ? html`<svg class="badge" viewBox="0 0 16 16"><path d="M5 5h10v10H5z" fill="#fff" stroke="#000" /><path d="M1 1h10v10H1z" fill="#3a8cf0" stroke="#000" stroke-width="1.300" /></svg>`
        : nothing}
      <span class="name">${r.name}</span>
      <button class="menu" aria-label="レイヤーメニュー">
        <svg viewBox="0 0 11 12"><path d="M1 2v7l4-3.500zM6 3h4v1H6zM6 6h4v1H6zM6 9h4v1H6z" fill="#fff" /></svg>
      </button>
    </li>`;
  }

  render() {
    return html`
      <div class="frame">
        <header class="titlebar">
          ${icon("app", "app")}
          <h1>ComicStudio EX - [[新規ページ] (21.00 * 29.70cm 600dpi)]</h1>
          <div class="winbuttons">
            <button aria-label="最小化"><svg viewBox="0 0 12 12"><path d="M2 8h8v2H2z" /></svg></button>
            <button aria-label="最大化"><svg viewBox="0 0 12 12"><path d="M1.500 2h9v7h-9z" fill="none" stroke="#000" /><path d="M1 1h10v2H1z" /></svg></button>
            <button class="quit" aria-label="閉じる">x</button>
          </div>
        </header>
        <nav class="menubar">
          ${icon("app", "app")}
          <div class="menus">${MENUS.map(([t, k]) => html`<button>${t}(<u>${k}</u>)</button>`)}</div>
          <div class="mdi">
            <button aria-label="最小化"><svg viewBox="0 0 12 12"><path d="M3 8h6v2H3z" fill="#456" /></svg></button>
            <button aria-label="元に戻す"><svg viewBox="0 0 12 12" fill="none" stroke="#456"><path d="M4.500 4V2.500h6v5H8M2.500 5.500h5v4h-5zM4 3h6.500M2 6h5.500" /></svg></button>
            <button aria-label="閉じる"><svg viewBox="0 0 12 12"><path d="M3 3l6 6M9 3L3 9" stroke="#456" stroke-width="2" /></svg></button>
          </div>
        </nav>
        <main class="client">
          <section class="document">
            ${this.toolbar()}
            <div class="canvas">
              <div class="sheet">
                <div class="selection">
                  <svg class="handles" viewBox="0 0 48 78">
                    <path d="M.5.5h6v6h-6zM20.500.5h6v6h-6zM41.500.5h6v6h-6zM.5 35.500h6v6h-6zM41.500 35.500h6v6h-6zM.5 71.500h6v6h-6zM20.500 71.500h6v6h-6zM41.500 71.500h6v6h-6z" />
                  </svg>
                  <span>あか</span>
                </div>
              </div>
            </div>
            <div class="hscroll">${this.chevron("left")}<i class="thumb"></i></div>
          </section>
          <aside class="dock"><i></i></aside>
        </main>
        <footer class="status"><div></div><span>[ドラッグ前] Alt：新規テキスト</span>${this.grip()}</footer>
      </div>

      <palette-window class="pText" caption="テキスト ツールオプション">
        <div class="folderOption"><label class="tick"><input type="checkbox" />テキストフォルダに格納する</label></div>
      </palette-window>

      <palette-window class="pMaterial" caption="素材"></palette-window>

      <palette-window class="pAction" caption="アクション">
        <div class="abar">
          <label class="combo"><select aria-label="アクションセット"><option>新規アクションセ...</option></select></label>
          ${this.tool("record", "記録")} ${this.tool("play", "再生")}<i class="sep"></i>
          ${this.tool("trashOff", "削除")} ${this.tool("copyOff", "複製")}<i class="sep"></i>${this.tool("flyout", "メニュー")}
        </div>
        <div class="listing">
          <ul class="actions">
            ${ACTIONS.map((a) => html`<li><input type="checkbox" checked aria-label=${a} /><b></b><i class="tri"></i><span>${a}</span></li>`)}
          </ul>
          <div class="side">${this.chevron("up")}<i class="vthumb"></i><i class="push"></i>${this.chevron("down")}${this.grip()}</div>
        </div>
      </palette-window>

      <palette-window class="pLayer" caption="レイヤー">
        <div class="lbar">
          ${this.tool("palette", "カラー表示")}<input class="field" aria-label="不透明度" value="100 %" />
          <button class="arrow" aria-label="不透明度の一覧"></button><i class="sep"></i>
          ${this.tool("newLayer", "新規レイヤー")} ${this.tool("folder", "新規フォルダ")} ${this.tool("trash", "削除")}<i class="sep"></i>
          ${this.tool("lock", "ロック")}<i class="sep"></i>${this.tool("flyout", "メニュー")}
        </div>
        <div class="listing lists">
          <ul class="layers">${LAYERS.map((r) => this.layerRow(r))}</ul>
          <div class="side">${this.chevron("up", true)}</div>
        </div>
      </palette-window>

      <palette-window class="pTools">
        <div class="tools">
          ${TOOLS.map((g) => html`<div class="grid2">${g.map((t) => this.toolCell(t))}</div><hr class="line" />`)}
          <div class="slots"><i class="slot"></i><i class="slot"></i><i class="slot"></i></div>
          <div class="bigslot"></div>
        </div>
      </palette-window>

      <palette-window class="pProps" caption="プロパティ">
        <div class="ptabs">
          <svg viewBox="0 0 258 18"><path d="M0 1.500h63l7 7M70.500 17V1.500h29L117 17.500h21L153 1.500h47v16M201 8l7-6.500h44v16h6M0 17.500h138" /></svg>
          <div><button>選択範囲</button><button>素材</button><button class="on">レイヤー</button><button class="last">テキスト</button></div>
        </div>
        <div class="props">
          <span class="key">種類:</span>
          <span class="val">テキストレイヤー<i class="grow"></i>${icon("unlock")}</span>
          <label class="key" for="layer-name">レイヤー名:</label>
          <span class="val"><input id="layer-name" class="field" value="あか" /></span>
          <span class="key">表現色:</span>
          <span class="val"><output class="field mode">黒白(2bit)</output><span class="label">解像度:</span><output class="field dpi">600.0 dpi</output></span>
          <span class="key">トーン領域:</span>
          <span class="val"><label class="tick off"><input type="checkbox" disabled />表示する</label></span>
          <span class="key">サブ定規:</span>
          <span class="val"><label class="tick off wide"><input type="checkbox" disabled />レイヤー化</label><label class="tick off"><input type="checkbox" disabled />表示しない</label></span>
        </div>
        <hr class="rule" />
        <div class="detail"><button class="more">詳細表示</button></div>
      </palette-window>

      <palette-window class="pHistory">
        <div class="htools">${this.tool("undoBack", "取り消し")} ${this.tool("redoBack", "やり直し")}<i class="sep"></i>${this.tool("flyout", "メニュー")}</div>
        <div class="listing">
          <ul class="history">
            <li>新規ページ</li><li>新規テキストレイヤー</li><li>レイヤーの削除</li><li>新規テキストレイヤー</li>
          </ul>
          <div class="side">${this.chevron("up", true)}<i class="push"></i>${this.chevron("down", true)}${this.grip()}</div>
        </div>
      </palette-window>

      <palette-window class="pCustom" caption="カスタムツール">
        <div class="picker">
          <label class="combo"><select aria-label="カスタムセット"><option>ペン入れ</option></select></label>
          <button class="tool" aria-label="メニュー">${icon("flyout")}</button>
        </div>
        <hr class="line" />
        ${this.tiles(["object", "move", "wand", "layers", "lasso", "joint", "marquee", "closedFill"])}
        <button class="command">保存</button>
        <hr class="line" />
        ${this.tiles(["pen:sky", "pencil:teal", "pen:peach", "curve", "pen:cream", "pencil:teal", "pen:navy", "pen:pink"])}
        <hr class="line" />
        ${this.tiles(["eraser:grey", "eraser:brown", "eraser:tan", "slot"])}
        <div class="slots"><i class="slot"></i><i class="slot"></i></div>
        <button class="command" disabled>定規の切り取り</button>
        <button class="command">移動と変形/拡大・縮小</button>
        <button class="command">トーン表示設定/網点</button>
        <button class="command on">選択範囲表示</button>
        <hr class="line" />
        ${this.tiles(["pen:purple", "pen:orange", "pen:green", "marker:rose", "pen:slate", "pattern:slate", "pattern:mist", "text:on"])}
        <hr class="line" />
        ${this.tiles(["ellipse:sky", "line:sky", "ellipse:orange", "pen:orange", "ellipse", "rect", "pattern", "pen:green"])}
      </palette-window>
    `;
  }
}
